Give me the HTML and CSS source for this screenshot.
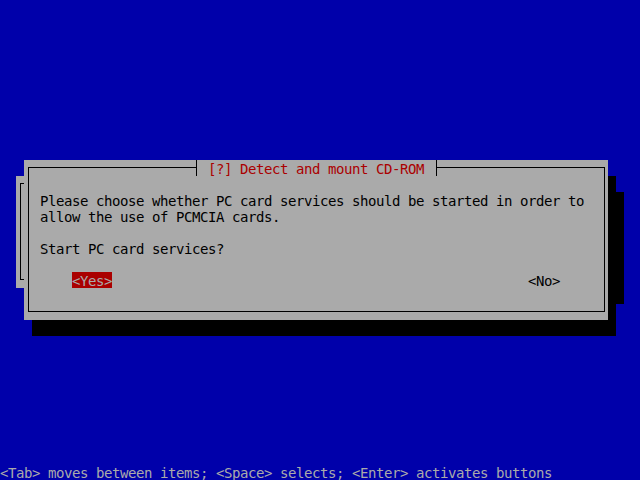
FILE: index.html
```html
<!DOCTYPE html>
<html lang="en">
<head>
  <meta charset="UTF-8">
  <title>Detect and mount CD-ROM</title>
  <link rel="stylesheet" href="styles.css">
</head>
<body>
  <div class="screen">
    <!-- previous dialog, mostly hidden -->
    <div class="window window-back">
      <div class="frame"></div>
    </div>

    <div class="window window-front">
      <div class="frame">
        <div class="title"> [?] Detect and mount CD-ROM </div>
        <div class="body">
          <p>Please choose whether PC card services should be started in order to</p>
          <p>allow the use of PCMCIA cards.</p>
          <p class="gap">Start PC card services?</p>
        </div>
        <div class="buttons">
          <span class="button active">&lt;Yes&gt;</span>
          <span class="button">&lt;No&gt;</span>
        </div>
      </div>
    </div>

    <div class="helpline">&lt;Tab&gt; moves between items; &lt;Space&gt; selects; &lt;Enter&gt; activates buttons</div>
  </div>
</body>
</html>
```

FILE: styles.css
```css
body {
  margin: 0;
  background: #0000aa;
}

/* 80x30 text screen, 8x16 cells */
.screen {
  display: grid;
  grid-template-columns: repeat(80, 8px);
  grid-template-rows: repeat(30, 16px);
  width: 640px;
  height: 480px;
  background: #0000aa;
  color: #aaaaaa;
  font-family: "DejaVu Sans Mono", monospace;
  font-size: 14px;
  letter-spacing: -0.4287px;
  line-height: 18px; /* pushes the baseline 1px down inside a 16px cell */
  white-space: nowrap;
  overflow: hidden;
}

.window {
  display: flex;
  flex-direction: column;
  background: #aaaaaa;
  color: #000;
  box-shadow: 8px 16px 0 #000;
}

.window-back {
  grid-column: 3 / 78;
  grid-row: 12 / 19;
}

.window-front {
  grid-column: 4 / 77;
  grid-row: 11 / 21;
}

.frame {
  flex: 1;
  display: flex;
  flex-direction: column;
  margin: 7px 3px 8px 4px;
  border: 1px solid #000;
}

.title {
  align-self: center;
  height: 16px;
  margin-top: -8px;
  padding: 0 4px 0 3px;
  border-left: 1px solid #000;
  border-right: 1px solid #000;
  background: #aaaaaa;
  color: #aa0000;
  white-space: pre;
}

.body {
  margin-top: 16px;
  padding-left: 11px;
}

.body p {
  margin: 0;
  height: 16px;
}

.body .gap {
  margin-top: 16px;
}

.buttons {
  display: flex;
  justify-content: space-between;
  margin-top: 16px;
  padding: 0 44px 0 43px;
}

.button {
  height: 16px;
}

.button.active {
  background: #aa0000;
  color: #aaaaaa;
}

.helpline {
  grid-column: 1 / -1;
  grid-row: 30;
  height: 16px;
}
```
